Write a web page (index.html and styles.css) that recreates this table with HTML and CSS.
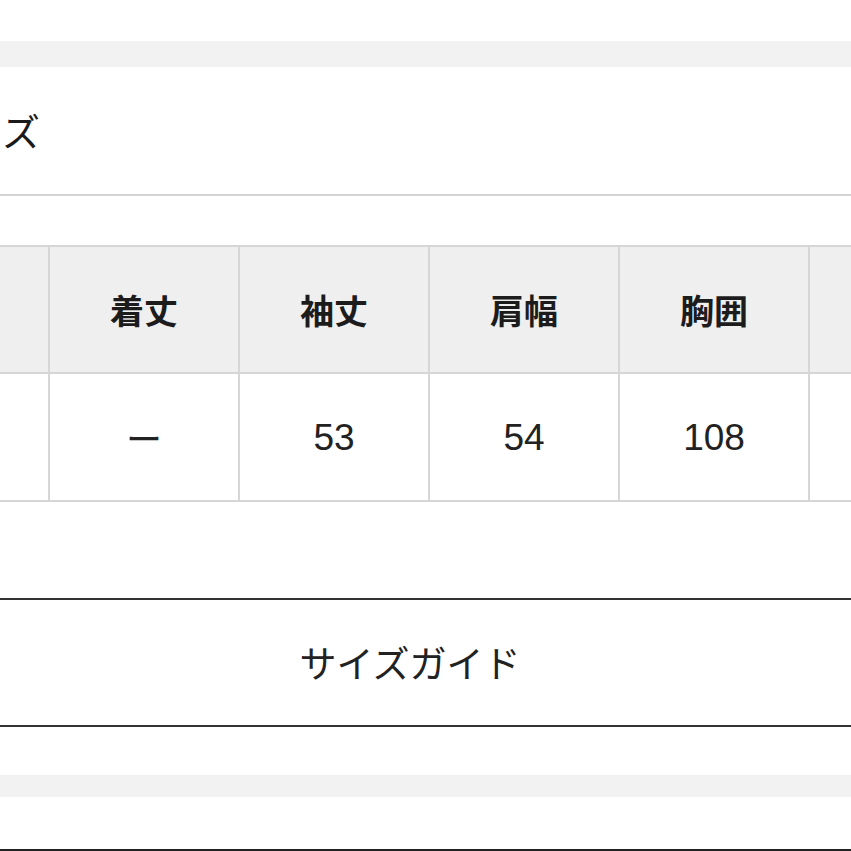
FILE: index.html
```html
<!DOCTYPE html>
<html lang="ja">
<head>
<meta charset="utf-8">
<link rel="stylesheet" href="styles.css">
</head>
<body>
<div class="page">
  <div class="band band-top"></div>
  <h2 class="heading">ズ</h2>
  <div class="rule"></div>
  <table class="size-table">
    <thead>
      <tr>
        <th></th>
        <th>着丈</th>
        <th>袖丈</th>
        <th>肩幅</th>
        <th>胸囲</th>
        <th></th>
      </tr>
    </thead>
    <tbody>
      <tr>
        <td></td>
        <td class="dash">ー</td>
        <td>53</td>
        <td>54</td>
        <td>108</td>
        <td></td>
      </tr>
    </tbody>
  </table>
  <div class="guide">サイズガイド</div>
  <div class="band band-bottom"></div>
  <div class="next"></div>
</div>
</body>
</html>
```
FILE: styles.css
```css
html, body {
  margin: 0;
  padding: 0;
  background: #ffffff;
  overflow: hidden;
}
body {
  width: 851px;
  height: 851px;
  font-family: "Noto Sans CJK JP", "Liberation Sans", sans-serif;
  color: #1e1e1e;
}
.page {
  margin-left: -142px;
  width: 1104px;
  padding-top: 41px;
}
.band {
  background: #f2f2f2;
}
.band-top {
  height: 26px;
}
.heading {
  margin: 0;
  height: 125px;
  padding-left: 144px;
  display: flex;
  align-items: center;
  font-size: 38px;
  font-weight: 400;
  line-height: 1;
  color: #1a1a1a;
}
.rule {
  height: 2px;
  margin-top: 2px;
  background: #d4d4d4;
  margin-bottom: 49px;
}
.size-table {
  width: 1140px;
  border-collapse: separate;
  border-spacing: 0;
  table-layout: fixed;
  border-top: 2px solid #d6d6d6;
  border-left: 2px solid #d6d6d6;
}
.size-table th,
.size-table td {
  width: 188px;
  border-right: 2px solid #d6d6d6;
  border-bottom: 2px solid #d6d6d6;
  text-align: center;
  vertical-align: middle;
  padding: 0;
  line-height: 1;
}
.size-table th {
  height: 125px;
  background: #efefef;
  font-size: 34px;
  font-weight: 700;
  color: #1c1c1c;
}
.size-table td {
  height: 126px;
  font-family: "Liberation Sans", "Noto Sans CJK JP", sans-serif;
  font-size: 37px;
  color: #222;
}
.size-table td.dash {
  font-family: "Noto Sans CJK JP", sans-serif;
  font-size: 36px;
}
.guide {
  box-sizing: border-box;
  margin-top: 96px;
  height: 129px;
  border-top: 2px solid #333;
  border-bottom: 2px solid #333;
  display: flex;
  align-items: center;
  justify-content: center;
  font-size: 37px;
  line-height: 1;
  color: #222;
}
.band-bottom {
  margin-top: 48px;
  height: 22px;
}
.next {
  margin-top: 52px;
  height: 2px;
  background: #222;
}
```
